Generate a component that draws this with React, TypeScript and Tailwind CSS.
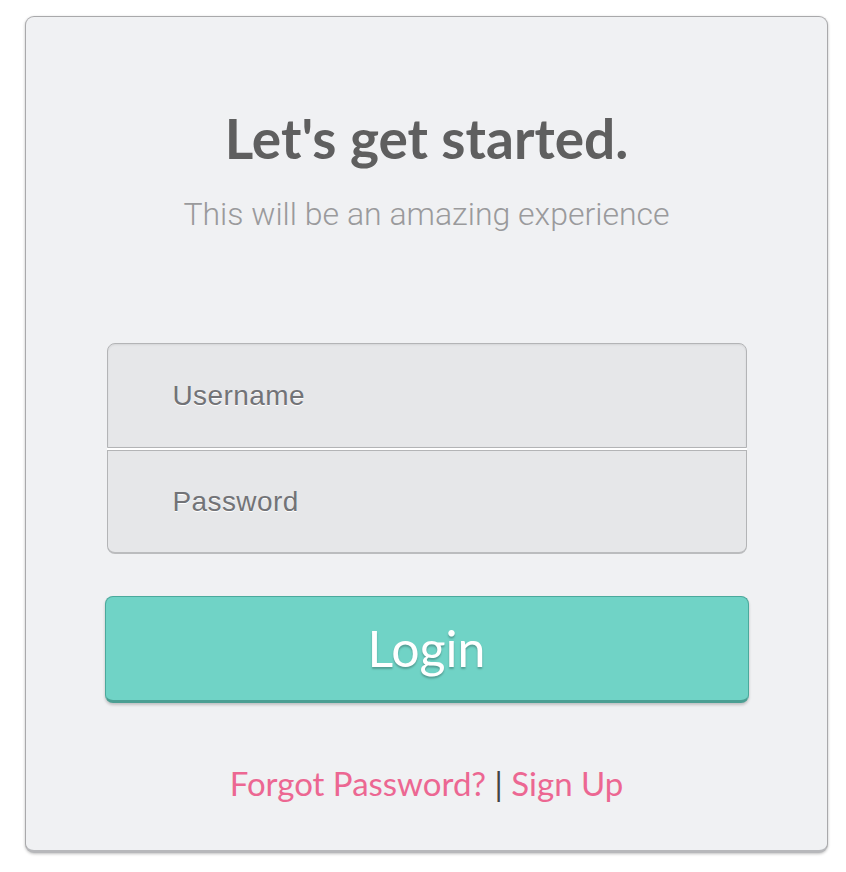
import React from "react";

export default function App() {
  return (
    <div className="w-[846px] h-[872px] bg-white pt-[16px] pl-[25px]">
      <div className="w-[803px] h-[837px] rounded-[9px] bg-[#f0f1f3] border border-[#a9a9ab] border-b-[3px] border-b-[#b7b8bb] shadow-[0_1px_3px_rgba(0,0,0,0.25)] flex flex-col items-center">
        <h1
          className="mt-[85px] text-[55px] leading-[72px] font-bold text-[#5f5f5f]"
          style={{ fontFamily: "Lato, sans-serif" }}
        >
          Let's get started.
        </h1>
        <p
          className="mt-[20px] text-[32px] leading-[40px] font-light text-[#9a9a9c]"
          style={{ fontFamily: "Roboto, sans-serif" }}
        >
          This will be an amazing experience
        </p>
        <div className="mt-[109px] w-[640px] flex flex-col">
          <div className="h-[105px] rounded-t-[8px] bg-[#e6e7e9] border border-[#b3b4b6] shadow-[inset_0_1px_2px_rgba(0,0,0,0.08)] flex items-center pl-[65px]">
            <span
              className="text-[28px] text-[#727377] tracking-[0.4px]"
              style={{ fontFamily: "'Liberation Sans', Arial, sans-serif", textShadow: "0 1px 0 #fff" }}
            >
              Username
            </span>
          </div>
          <div className="h-[2px] bg-white" />
          <div className="h-[104px] rounded-b-[8px] bg-[#e6e7e9] border border-[#b3b4b6] border-b-[2px] border-b-[#bbbcbe] flex items-center pl-[65px]">
            <span
              className="text-[28px] text-[#727377] tracking-[0.4px]"
              style={{ fontFamily: "'Liberation Sans', Arial, sans-serif", textShadow: "0 1px 0 #fff" }}
            >
              Password
            </span>
          </div>
        </div>
        <button
          className="mt-[42px] w-[644px] h-[107px] rounded-[8px] bg-[#70d3c6] border border-[#4ba99c] border-b-[3px] border-b-[#4b9f93] shadow-[0_2px_3px_rgba(0,0,0,0.2)] flex items-center justify-center"
        >
          <span
            className="text-[50px] text-white"
            style={{ fontFamily: "Lato, sans-serif", textShadow: "0 2px 2px rgba(0,0,0,0.25)" }}
          >
            Login
          </span>
        </button>
        <div
          className="mt-[60px] text-[33px] leading-[40px]"
          style={{ fontFamily: "Lato, sans-serif" }}
        >
          <span className="text-[#ec6792]">Forgot Password?</span>
          <span className="text-[#444]"> | </span>
          <span className="text-[#ec6792]">Sign Up</span>
        </div>
      </div>
    </div>
  );
}
